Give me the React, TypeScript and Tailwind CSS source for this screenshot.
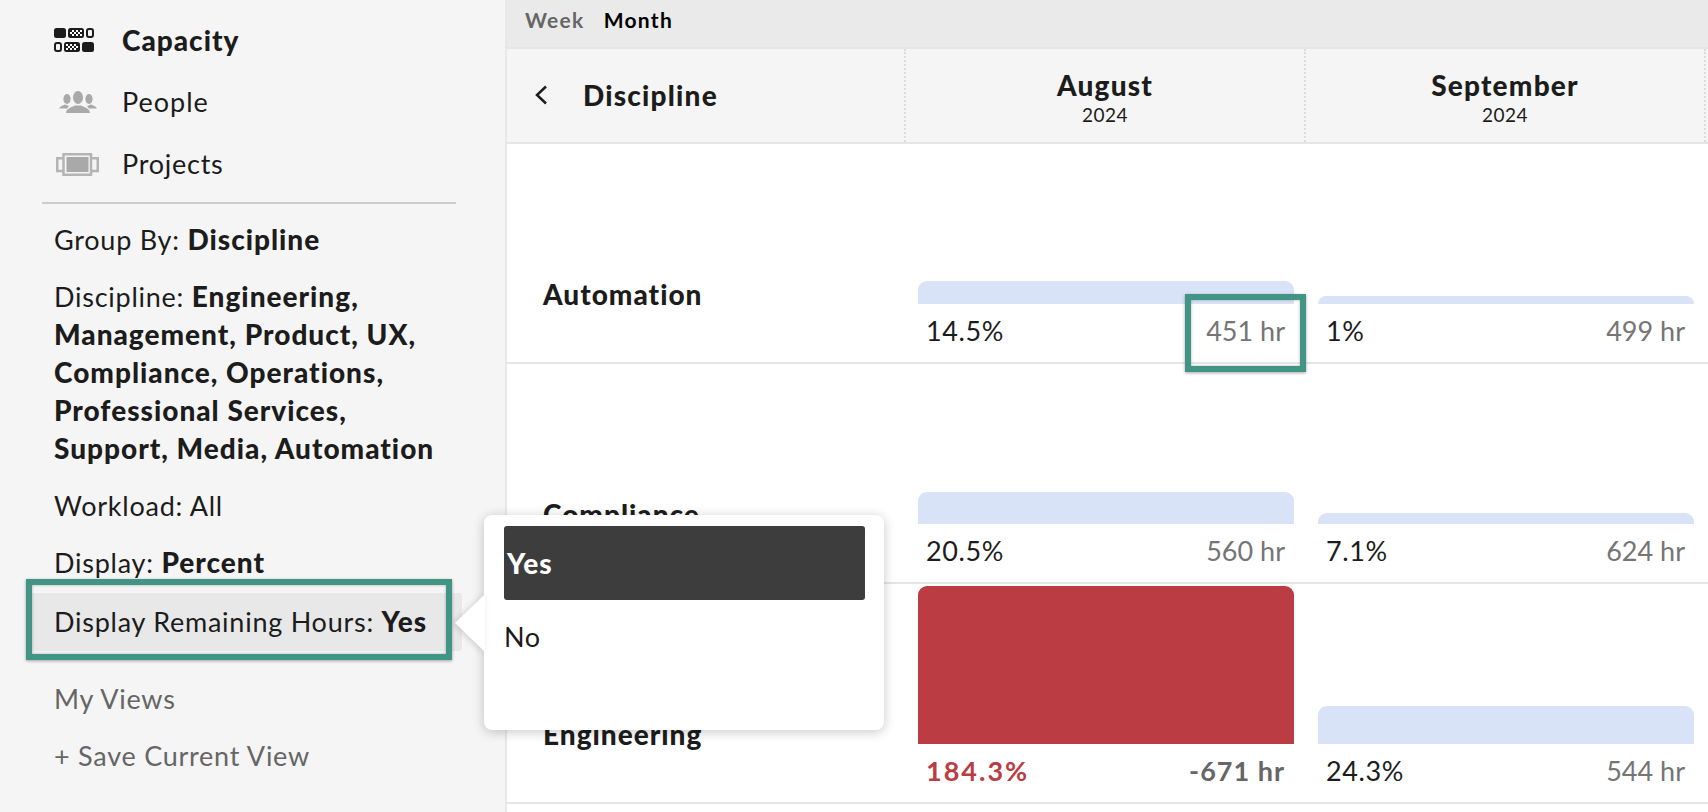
const rows = [
  {
    name: "Automation",
    cells: [
      { bar: 23, pct: "14.5%", hr: "451 hr" },
      { bar: 8, pct: "1%", hr: "499 hr" },
    ],
  },
  {
    name: "Compliance",
    cells: [
      { bar: 32, pct: "20.5%", hr: "560 hr" },
      { bar: 11, pct: "7.1%", hr: "624 hr" },
    ],
  },
  {
    name: "Engineering",
    cells: [
      { bar: 158, pct: "184.3%", hr: "-671 hr", over: true },
      { bar: 38, pct: "24.3%", hr: "544 hr" },
    ],
  },
];

function CapacityIcon() {
  return (
    <svg width="40" height="24" viewBox="0 0 40 24">
      <defs>
        <pattern id="checks" width="4" height="4" patternUnits="userSpaceOnUse">
          <rect width="4" height="4" fill="#1c1c1c" />
          <rect width="2" height="2" fill="#fff" />
          <rect x="2" y="2" width="2" height="2" fill="#fff" />
        </pattern>
      </defs>
      <rect x="0" y="0" width="12" height="10" rx="2.5" fill="#1c1c1c" />
      <rect x="14" y="0" width="16" height="10" rx="2.5" fill="#1c1c1c" />
      <rect x="16" y="2" width="12" height="6" fill="url(#checks)" />
      <rect x="33" y="1" width="6" height="8" rx="2" fill="none" stroke="#1c1c1c" strokeWidth="2" />
      <rect x="1" y="15" width="6" height="8" rx="2" fill="none" stroke="#1c1c1c" strokeWidth="2" />
      <rect x="10" y="14" width="16" height="10" rx="2.5" fill="#1c1c1c" />
      <rect x="12" y="16" width="12" height="6" fill="url(#checks)" />
      <rect x="28" y="14" width="12" height="10" rx="2.5" fill="#1c1c1c" />
    </svg>
  );
}

function PeopleIcon() {
  return (
    <svg width="38" height="22" viewBox="0 0 38 22" fill="#a9a9a9">
      <ellipse cx="8" cy="8" rx="3.6" ry="5" />
      <ellipse cx="30" cy="8" rx="3.6" ry="5" />
      <path d="M0 17.5c1-2.5 4-3 6-4l4 1.5-2 2.5z" />
      <path d="M38 17.5c-1-2.5-4-3-6-4l-4 1.5 2 2.5z" />
      <ellipse cx="19" cy="6.500" rx="5" ry="6.500" />
      <path d="M7 22c.5-4 3-5 9-7.500h6c6 2.500 8.500 3.500 9 7.500z" />
    </svg>
  );
}

function ProjectsIcon() {
  return (
    <svg width="43" height="23" viewBox="0 0 43 23" fill="none" stroke="#b4b4b4" strokeWidth="2.5">
      <path d="M7 5.250H1.250V18H7M35 5.250h6.750V18H35" />
      <rect x="7.500" y="1.250" width="27.500" height="20.500" />
      <rect x="10.500" y="4" width="22" height="15" fill="#a9a9a9" stroke="none" />
    </svg>
  );
}

function Highlight({ className }: { className: string }) {
  return (
    <div
      className={`pointer-events-none absolute z-30 border-[6px] border-[#429484] shadow-[0_1px_3px_rgba(0,0,0,0.35),inset_0_0_3px_rgba(0,0,0,0.3)] ${className}`}
    />
  );
}

export default function App() {
  return (
    <div className="relative flex h-screen overflow-hidden bg-white font-['Lato',sans-serif] text-[#1c1c1c]">
      <aside className="w-[507px] shrink-0 border-r-2 border-[#e8e8e8] bg-[#f5f5f5] pt-[9px] text-[27px] leading-[38px] tracking-[0.75px]">
        <nav className="flex flex-col">
          <a className="flex h-[62px] items-center gap-[28px] pl-[54px] text-[28px] font-black tracking-[1px]">
            <CapacityIcon />
            Capacity
          </a>
          <a className="flex h-[62px] items-center gap-[25px] pl-[59px] tracking-[1px]">
            <PeopleIcon />
            People
          </a>
          <a className="flex h-[62px] items-center gap-[23px] pl-[56px]">
            <ProjectsIcon />
            Projects
          </a>
        </nav>
        <div className="mx-[42px] mt-[7px] h-[2px] w-[414px] bg-[#cccccc]" />
        <div className="mt-[17px] flex flex-col gap-[19px] pl-[54px] pr-[50px]">
          <p>
            Group By: <b className="text-[28px] leading-none font-black tracking-[1px]">Discipline</b>
          </p>
          <p>
            Discipline:{" "}
            <b className="text-[28px] leading-none font-black tracking-[1px]">
              Engineering, Management, Product, UX, Compliance, Operations, Professional Services, Support, Media,
              Automation
            </b>
          </p>
          <p>Workload: All</p>
          <p>
            Display: <b className="text-[28px] leading-none font-black tracking-[1px]">Percent</b>
          </p>
          <p className="-mt-[8px] mb-[10px] -ml-[24px] -mr-[7px] rounded-[3px] bg-[#e8e8e8] py-[10px] pl-[24px] whitespace-nowrap">
            Display Remaining Hours: <b className="text-[28px] leading-none font-black tracking-[1px]">Yes</b>
          </p>
          <p className="text-[#666666]">My Views</p>
          <p className="text-[#666666]">+ Save Current View</p>
        </div>
      </aside>

      <main className="min-w-0 flex-1">
        <div className="flex h-[47px] items-center gap-[19px] bg-[#eaeaea] pb-[7px] pl-[18px] text-[21px] font-bold tracking-[1.3px]">
          <span className="text-[#666666]">Week</span>
          <span className="text-black">Month</span>
        </div>
        <div className="grid h-[97px] grid-cols-[399px_400px_400px] border-y-2 border-[#e6e6e6] bg-[#f5f5f5]">
          <div className="flex items-center gap-[35px] border-r-2 border-dotted border-[#dcdcdc] pb-[1px] pl-[27px]">
            <svg width="14" height="20" viewBox="0 0 14 20" fill="none" stroke="#1c1c1c" strokeWidth="2.5">
              <path d="M12 1.500 3 10l9 8.500" />
            </svg>
            <span className="text-[28px] font-black tracking-[1.2px]">Discipline</span>
          </div>
          {["August", "September"].map((month) => (
            <div
              key={month}
              className="flex flex-col items-center justify-center border-r-2 border-dotted border-[#dcdcdc] pt-[2px]"
            >
              <span className="text-[28px] leading-[35px] font-black tracking-[1.2px]">{month}</span>
              <span className="text-[19px] leading-[23px] tracking-[0.5px]">2024</span>
            </div>
          ))}
        </div>
        {rows.map((row) => (
          <div
            key={row.name}
            className="grid h-[220px] grid-cols-[399px_400px_400px] border-b-2 border-[#e6e6e6] first:h-[219px]"
          >
            <div className="pt-[131px] pl-[36px]">
              <span className="text-[28px] leading-[38px] font-black tracking-[1px]">{row.name}</span>
            </div>
            {row.cells.map((cell) => (
              <div key={cell.pct} className="flex flex-col justify-end px-3">
                <div
                  className={`rounded-t-[9px] ${cell.over ? "bg-[#bb3c43]" : "bg-[#d9e3f7]"}`}
                  style={{ height: cell.bar }}
                />
                <div className="flex h-[58px] items-start justify-between pt-[8px] pr-[9px] pl-[8px] text-[27px] leading-[38px]">
                  <span className={cell.over ? "font-bold tracking-[2px] text-[#bb3c43]" : "tracking-[0.6px]"}>
                    {cell.pct}
                  </span>
                  <span className={cell.over ? "font-bold tracking-[1px] text-[#666666]" : "text-[#757575]"}>
                    {cell.hr}
                  </span>
                </div>
              </div>
            ))}
          </div>
        ))}
      </main>

      {/* popover for Display Remaining Hours */}
      <div className="absolute top-[515px] left-[484px] z-20 h-[215px] w-[400px] rounded-[8px] bg-white pt-[11px] pr-[19px] pl-[20px] text-[27px] tracking-[0.5px] shadow-[0_2px_12px_rgba(0,0,0,0.22)]">
        <svg
          className="absolute top-[79px] -left-[29px] drop-shadow-[-2px_1px_3px_rgba(0,0,0,0.15)]"
          width="30"
          height="58"
          viewBox="0 0 30 58"
        >
          <path d="M30 0 0 29l30 29z" fill="#fff" />
        </svg>
        <div className="flex h-[74px] items-center rounded-[3px] bg-[#3d3d3d] pl-[3px] text-[28px] font-black tracking-[1px] text-white">
          Yes
        </div>
        <div className="flex h-[74px] items-center">No</div>
      </div>

      <Highlight className="top-[579px] left-[26px] h-[81px] w-[426px]" />
      <Highlight className="top-[294px] left-[1185px] h-[78px] w-[121px]" />
    </div>
  );
}
